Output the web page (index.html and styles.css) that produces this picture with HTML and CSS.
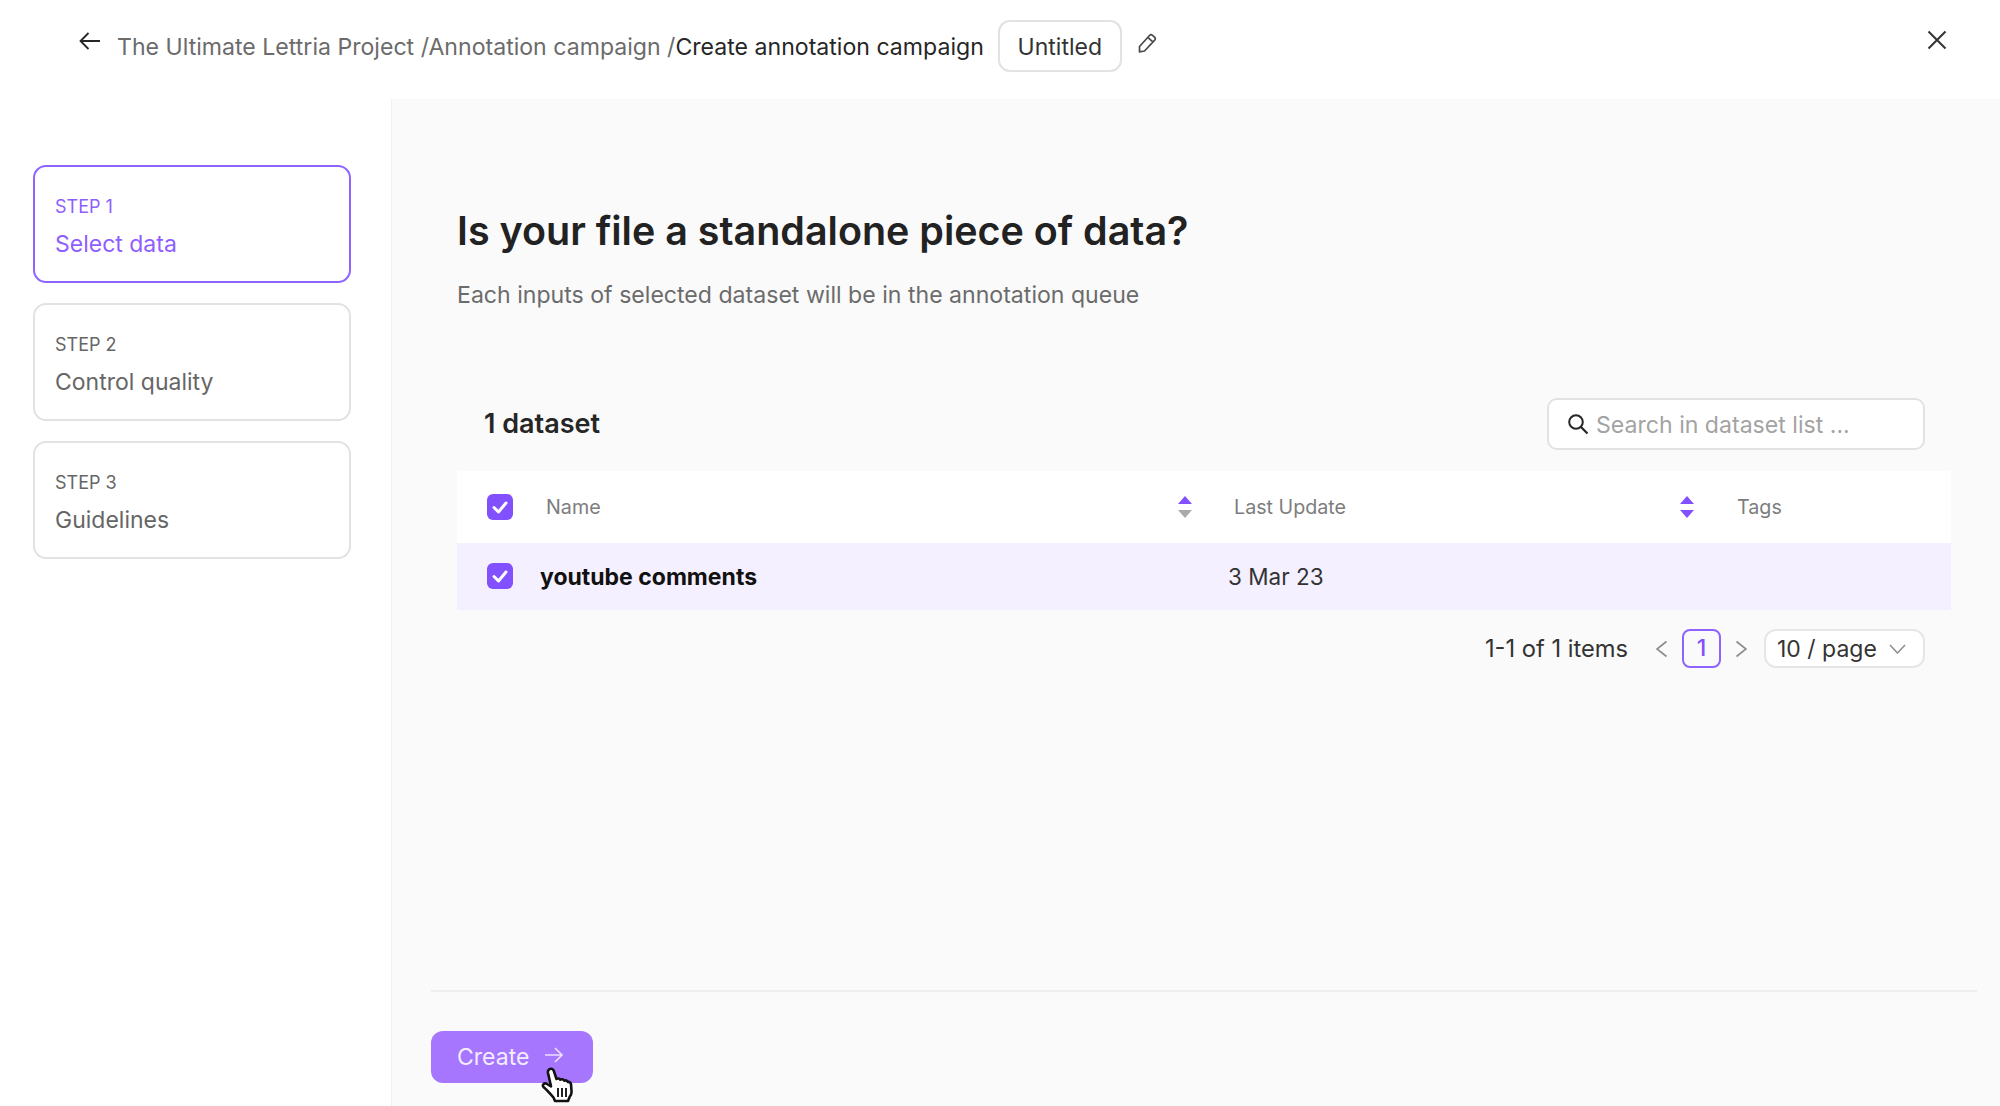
FILE: index.html
```html
<!DOCTYPE html>
<html lang="en">
<head>
<meta charset="utf-8">
<title>Create annotation campaign</title>
<link rel="stylesheet" href="styles.css">
</head>
<body>
<div class="page">
  <header class="topbar">
    <svg class="back-icon" viewBox="0 0 24 20" width="24" height="20"><path d="M22 10H3M10.500 2L2.500 10l8 8" fill="none" stroke="#262626" stroke-width="1.800"/></svg>
    <nav class="crumbs"><span>The Ultimate Lettria Project /</span><span>Annotation campaign /</span><span class="crumb-current">Create annotation campaign</span></nav>
    <div class="name-box">Untitled</div>
    <svg class="pencil-icon" viewBox="0 0 20 20" width="20" height="20"><path d="M2.500 13.500L12.500 2.500c1-1 2-1 3-.2l2 1.800c1 1 1 2 .2 3L7.500 18l-5 .8zM10.800 4.400l5 4.500" fill="none" stroke="#4a4a4a" stroke-width="1.700" stroke-linejoin="round"/></svg>
    <svg class="close-icon" viewBox="0 0 20 20" width="20" height="20"><path d="M1.500 1.500l17 17M18.500 1.500l-17 17" fill="none" stroke="#333" stroke-width="2"/></svg>
  </header>
  <div class="body">
    <aside class="sidebar">
      <div class="step step-active"><div class="step-num">STEP 1</div><div class="step-name">Select data</div></div>
      <div class="step"><div class="step-num">STEP 2</div><div class="step-name">Control quality</div></div>
      <div class="step"><div class="step-num">STEP 3</div><div class="step-name">Guidelines</div></div>
    </aside>
    <main class="main">
      <div class="content">
        <h1 class="title">Is your file a standalone piece of data?</h1>
        <p class="subtitle">Each inputs of selected dataset will be in the annotation queue</p>
        <div class="toolbar">
          <div class="count">1 dataset</div>
          <div class="search">
            <svg viewBox="0 0 22 22" width="22" height="22"><circle cx="9" cy="9" r="6.800" fill="none" stroke="#262626" stroke-width="2"/><path d="M14 14l6.500 6.500" stroke="#262626" stroke-width="2.200"/></svg>
            <span class="search-text">Search in dataset list ...</span>
          </div>
        </div>
        <div class="table">
          <div class="thead">
            <div class="cell-check"><span class="checkbox"><svg viewBox="0 0 26 26" width="26" height="26"><path d="M7 13.500l4.500 4.500 7.500-9" fill="none" stroke="#fff" stroke-width="3" stroke-linecap="round" stroke-linejoin="round"/></svg></span></div>
            <div class="th th-name"><span>Name</span><svg class="sort" viewBox="0 0 14 22" width="14" height="22"><path d="M7 0l7 8H0z" fill="#8250ff"/><path d="M7 22l7-8H0z" fill="#aaa"/></svg></div>
            <div class="th th-update"><span>Last Update</span><svg class="sort" viewBox="0 0 14 22" width="14" height="22"><path d="M7 0l7 8H0z" fill="#8250ff"/><path d="M7 22l7-8H0z" fill="#8250ff"/></svg></div>
            <div class="th"><span>Tags</span></div>
          </div>
          <div class="trow">
            <div class="cell-check row-check"><span class="checkbox"><svg viewBox="0 0 26 26" width="26" height="26"><path d="M7 13.500l4.500 4.500 7.500-9" fill="none" stroke="#fff" stroke-width="3" stroke-linecap="round" stroke-linejoin="round"/></svg></span></div>
            <div class="td-name">youtube comments</div>
            <div class="td-date">3 Mar 23</div>
            <div></div>
          </div>
        </div>
        <div class="pagination">
          <span class="total">1-1 of 1 items</span>
          <svg class="chev chev-prev" viewBox="0 0 13 18" width="13" height="18"><path d="M11.500 1.500L2 9l9.500 7.500" fill="none" stroke="#8c8c8c" stroke-width="1.600"/></svg>
          <span class="page-num">1</span>
          <svg class="chev chev-next" viewBox="0 0 13 18" width="13" height="18"><path d="M1.500 1.500L11 9l-9.500 7.500" fill="none" stroke="#8c8c8c" stroke-width="1.600"/></svg>
          <div class="page-size"><span>10 / page</span><svg viewBox="0 0 17 10" width="17" height="10"><path d="M1 1l7.500 8L16 1" fill="none" stroke="#8c8c8c" stroke-width="1.500"/></svg></div>
        </div>
      </div>
      <footer class="footer">
        <div class="create-wrap">
          <button class="create"><span>Create</span><svg viewBox="0 0 20 16" width="20" height="16"><path d="M1 8h17M11 1l7 7-7 7" fill="none" stroke="#ecdfff" stroke-width="1.600"/></svg></button>
          <svg class="hand" viewBox="0 0 34 36" width="34" height="36"><path d="M8 2.500c2-1.500 4.200-.6 4.800 1.300l2.700 8.200c1.300-.9 3-.6 3.800.7 1.300-.9 3.200-.5 3.900 1 1.300-.6 3-.2 3.600 1.200 1.500-.3 3 .7 3.200 2.300l.5 7c.2 2.600-.6 4.500-2 6l-1.500 3.800H14l-1.500-3.500C9.500 27 6 23 2.500 20c-1.500-1.800.3-4.300 2.700-3.500l4.800 2.800L7 6c-.3-1.500 0-2.700 1-3.500z" fill="#fff" stroke="#111" stroke-width="2.600" stroke-linejoin="round"/><path d="M17 21v9M21 21v9M25 21v9" stroke="#222" stroke-width="2"/></svg>
        </div>
      </footer>
    </main>
  </div>
</div>
</body>
</html>
```

FILE: styles.css
```css
* { box-sizing: border-box; }
html, body { margin: 0; padding: 0; background: #fff; }
body { font-family: Inter, "Liberation Sans", sans-serif; color: #262626; }
.page { width: 2000px; height: 1106px; display: flex; flex-direction: column; overflow: hidden; }

.topbar { height: 99px; flex: none; display: flex; align-items: flex-start; padding: 20px 53px 0 78px; background: #fff; }
.back-icon { margin-top: 11px; flex: none; }
.crumbs { margin-left: 15px; height: 52px; line-height: 54px; font-size: 23.100px; color: #6b6b6b; white-space: nowrap; }
.crumb-current { color: #262626; }
.name-box { margin-left: 14px; width: 124px; height: 52px; border: 2px solid #e2e2e2; border-radius: 12px; font-size: 23px; line-height: 50px; text-align: center; color: #333; }
.pencil-icon { margin: 13px 0 0 15px; flex: none; }
.close-icon { margin: 10px 0 0 auto; flex: none; }

.body { flex: 1; display: flex; min-height: 0; }
.sidebar { width: 392px; flex: none; padding: 66px 40px 0 33px; border-right: 1px solid #f0f0f0; display: flex; flex-direction: column; gap: 20px; background: #fff; }
.step { height: 118px; border: 2px solid #e2e2e2; border-radius: 13px; padding: 28px 0 0 20px; color: #666; }
.step-active { border-color: #8f63ff; color: #8f5eff; }
.step-num { font-size: 18px; line-height: 24px; }
.step-name { font-size: 23px; line-height: 30px; margin-top: 10px; }

.main { flex: 1; display: flex; flex-direction: column; background: #fafafa; min-width: 0; }
.content { flex: 1; padding: 102px 49px 0 65px; }
.title { margin: 0; font-size: 39.450px; line-height: 60px; font-weight: 600; color: #222; }
.subtitle { margin: 16px 0 0; font-size: 23.100px; line-height: 36px; color: #6b6b6b; }

.toolbar { margin-top: 85px; height: 52px; display: flex; align-items: center; justify-content: space-between; padding: 0 26px 0 27px; }
.count { font-size: 27px; font-weight: 600; color: #262626; margin-top: -2px; }
.search { width: 378px; height: 52px; border: 2px solid #e2e2e2; border-radius: 10px; background: #fff; display: flex; align-items: center; padding-left: 18px; gap: 7px; font-size: 23.100px; color: #a3a3a3; }
.search-text { margin-top: 1px; }

.table { margin-top: 21px; }
.thead, .trow { display: grid; grid-template-columns: 83px 688px 503px 220px; align-items: center; }
.thead { height: 72px; background: #fff; }
.trow { height: 67px; background: #f5f0ff; }
.cell-check { padding-left: 30px; display: flex; }
.row-check { margin-top: -1px; }
.checkbox { width: 26px; height: 26px; background: #8250ff; border-radius: 6px; display: block; }
.checkbox svg { display: block; }
.th { display: flex; align-items: center; justify-content: space-between; padding-left: 6px; font-size: 19.700px; color: #7d7d7d; }
.th-name { padding-right: 36px; }
.th-update { padding-right: 37px; }
.td-name { font-size: 23px; font-weight: 700; color: #111; }
.td-date { font-size: 22.500px; color: #333; }

.pagination { margin-top: 19px; height: 39px; padding-right: 26px; display: flex; align-items: center; justify-content: flex-end; font-size: 23px; color: #333; }
.total { font-size: 23.700px; margin-right: 27px; }
.chev { flex: none; }
.page-num { margin: 0 14px; width: 39px; height: 39px; border: 2px solid #8f63ff; border-radius: 8px; text-align: center; line-height: 35px; color: #8250ff; font-weight: 500; }
.chev-next { margin-right: 16px; }
.page-size { width: 161px; height: 39px; border: 2px solid #e6e6e6; border-radius: 12px; background: #fff; display: flex; align-items: center; justify-content: space-between; padding: 0 17px 0 11px; }

.footer { flex: none; height: 116px; margin: 0 23px 0 39px; border-top: 2px solid #eee; padding-top: 39px; }
.create-wrap { position: relative; width: 162px; }
.create { width: 162px; height: 52px; border: 0; border-radius: 12px; background: #a776ff; color: #f4edff; font: 23px Inter, sans-serif; display: flex; align-items: center; padding: 0 0 0 26px; gap: 15px; }
.create svg { margin-top: -4px; }
.hand { position: absolute; left: 110px; top: 36px; }
```
